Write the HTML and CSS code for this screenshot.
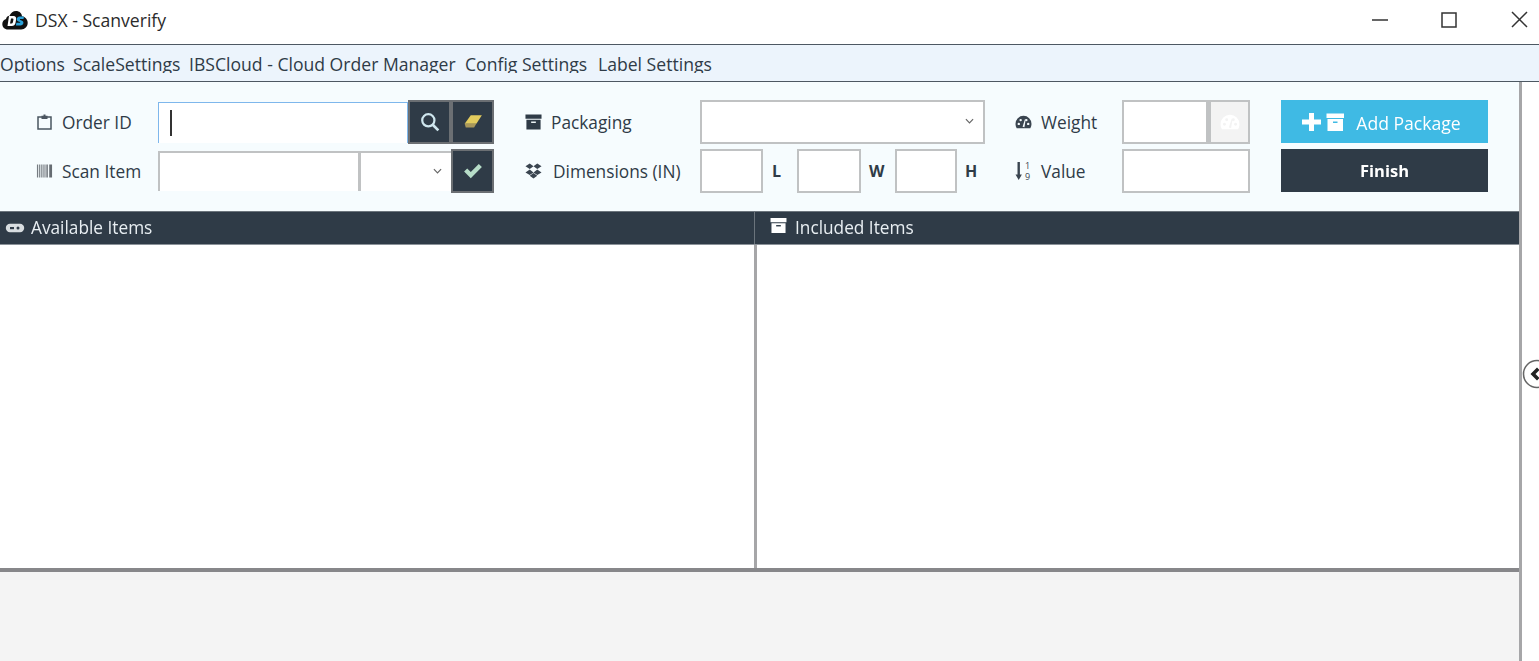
FILE: index.html
```html
<!DOCTYPE html>
<html lang="en">
<head>
<meta charset="utf-8">
<title>DSX - Scanverify</title>
<link rel="stylesheet" href="styles.css">
</head>
<body>
<div class="window">
  <header class="titlebar">
    <svg class="app-logo" viewBox="0 0 26 20"><path d="M6 19.500C2.500 19.500.3 17 .3 14c0-2.600 1.600-4.500 3.700-5C4.500 7 6 5.800 7.500 5.800 9 2.800 11 1 14 1c3.400 0 5.600 2.200 6 5.200 3.300.6 5.700 3.200 5.700 6.600 0 3.800-2.800 6.700-6.500 6.700z" fill="#111"/><path d="M7 6h4.500c2 0 3 1.500 2.600 3.500l-.6 3.500c-.4 2-1.800 3-3.600 3H5.500zM9 8.500l-1 5h1.500c.7 0 1.200-.4 1.400-1.200l.5-2.500c.1-.8-.2-1.300-1-1.300z" fill="#fff"/><path d="M22 6.500h-4.500c-1.500 0-2.500 1-2.700 2.300-.2 1.400.5 2.200 1.700 2.600l1.500.5c.4.200.3.900-.3.900h-3.300l-.5 2.700h4.500c1.700 0 2.800-1 3-2.500.2-1.400-.5-2.200-1.800-2.600l-1.400-.5c-.5-.2-.4-.8.200-.8h3.100z" fill="#2aa3dc"/></svg>
    <span class="app-title">DSX - Scanverify</span>
    <div class="window-controls">
      <svg class="wc" viewBox="0 0 70 30"><path d="M2 15h16" stroke="#333" stroke-width="1.500" fill="none"/></svg>
      <svg class="wc" viewBox="0 0 70 30"><rect x="2" y="8" width="14" height="14" stroke="#333" stroke-width="1.500" fill="none"/></svg>
      <svg class="wc wc-close" viewBox="0 0 19 30"><path d="M2 7l15 15M17 7L2 22" stroke="#333" stroke-width="1.500" fill="none"/></svg>
    </div>
  </header>

  <nav class="menubar">
    <span class="menu-item m1">Options</span>
    <span class="menu-item m2">ScaleSettings</span>
    <span class="menu-item m3">IBSCloud - Cloud Order Manager</span>
    <span class="menu-item m4">Config Settings</span>
    <span class="menu-item m5">Label Settings</span>
  </nav>

  <div class="workspace">
    <main class="content">
      <section class="toolbar">
        <div class="group group-order">
          <label class="field-label">
            <svg class="ico" viewBox="0 0 16 16"><path d="M1.500 3h13v12h-13z" fill="none" stroke="#4a5560" stroke-width="1.500"/><path d="M5 1.800h2V.5h2v1.300h2V5H5z" fill="#4a5560"/></svg>
            <span>Order ID</span>
          </label>
          <div class="fields">
            <div class="input focused grow"><span class="caret"></span></div>
            <button class="icon-btn"><svg viewBox="0 0 18 18" class="ico-btn"><circle cx="7.500" cy="7.500" r="5.500" fill="none" stroke="#cfe6ee" stroke-width="2"/><path d="M11.500 11.500l5 5" stroke="#cfe6ee" stroke-width="2.400"/></svg></button>
            <button class="icon-btn"><svg viewBox="0 0 18 18" class="ico-btn"><path d="M7 3h10l-5 7.500H1.500z" fill="#e3cc5e"/><path d="M1.500 10.500H12L10 14H2.500z" fill="#a9975a"/></svg></button>
          </div>
          <label class="field-label">
            <svg class="ico" viewBox="0 0 18 16"><path d="M1 1h1v14H1zM3 1h1v14H3zM5 1h1v14H5zM7 1h1v14H7zM9 1h1v14H9zM11 1h1.500v14H11zM14 1h3v14h-3z" fill="#666c72"/></svg>
            <span>Scan Item</span>
          </label>
          <div class="fields">
            <div class="input scan"></div>
            <div class="input select small grow"><svg class="chev" viewBox="0 0 10 6"><path d="M1 1l4 4 4-4" fill="none" stroke="#666" stroke-width="1.300"/></svg></div>
            <button class="icon-btn"><svg viewBox="0 0 18 18" class="ico-btn"><path d="M1 9.500l2.800-2.800 3.200 3.200L14.200 2.700 17 5.500 7 15.500z" fill="#b7ddc8"/></svg></button>
          </div>
        </div>

        <div class="group group-pack">
          <label class="field-label">
            <svg class="ico" viewBox="0 0 18 16"><path d="M.5 0h17v4.500H.5zM1.500 5.500h15V16h-15z" fill="#2f3b47"/><rect x="6.500" y="7.500" width="5" height="1.500" fill="#f6fcfe"/></svg>
            <span>Packaging</span>
          </label>
          <div class="fields">
            <div class="input select grow"><svg class="chev" viewBox="0 0 10 6"><path d="M1 1l4 4 4-4" fill="none" stroke="#666" stroke-width="1.300"/></svg></div>
          </div>
          <label class="field-label label-dim">
            <svg class="ico" viewBox="0 0 18 16"><path d="M5 0l4 3-4 3-4.500-3zM13 0l4.500 3L13 6 9 3zM5 6.500l4 3-4 2.800-4.500-2.800zM13 6.500l4.500 3L13 12.300 9 9.500zM5 13l4-2.800 4 2.800-4 3z" fill="#3a4550"/></svg>
            <span>Dimensions (IN)</span>
          </label>
          <div class="fields dims">
            <div class="input dim"></div><b class="unit u-l">L</b>
            <div class="input dim wide"></div><b class="unit u-w">W</b>
            <div class="input dim narrow"></div><b class="unit u-h">H</b>
          </div>
        </div>

        <div class="group group-weight">
          <label class="field-label">
            <svg class="ico" viewBox="0 0 18 16"><path d="M9 1.500a8.500 8.500 0 0 0-8.500 8.500c0 1.700.5 3.200 1.300 4.500h14.400c.8-1.300 1.300-2.800 1.300-4.500A8.500 8.500 0 0 0 9 1.500z" fill="#3a4550"/><g fill="#f6fcfe"><circle cx="4" cy="10" r="1.300"/><circle cx="6" cy="6" r="1.300"/><circle cx="12" cy="6" r="1.300"/><circle cx="14" cy="10" r="1.300"/><path d="M8 13l2.500-8 .8.300L10 13.500z"/></g></svg>
            <span>Weight</span>
          </label>
          <div class="fields">
            <div class="input grow"></div>
            <button class="scale-btn"><svg class="ico-btn" viewBox="0 0 18 16"><path d="M9 1.500a8.500 8.500 0 0 0-8.500 8.500c0 1.700.5 3.200 1.300 4.500h14.400c.8-1.300 1.300-2.800 1.300-4.500A8.500 8.500 0 0 0 9 1.500z" fill="#fff"/><g fill="#f3f3f3"><circle cx="4" cy="10" r="1.300"/><circle cx="6" cy="6" r="1.300"/><circle cx="12" cy="6" r="1.300"/><circle cx="14" cy="10" r="1.300"/><path d="M8 13l2.500-8 .8.300L10 13.500z"/></g></svg></button>
          </div>
          <label class="field-label">
            <svg class="ico ico-tall" viewBox="0 0 17 20"><path d="M2.500 1h2.400v12.500h2L3.700 19 .5 13.500h2z" fill="#3a4550"/><text x="10" y="8" class="sort-num">1</text><text x="10" y="18.500" class="sort-num">9</text></svg>
            <span>Value</span>
          </label>
          <div class="fields">
            <div class="input grow"></div>
          </div>
        </div>

        <div class="actions">
          <button class="btn btn-add">
            <svg class="add-ico" viewBox="0 0 42 18"><path d="M7 0h5v6.500h7v5h-7V18H7v-6.500H0v-5h7z" fill="#fff"/><path d="M24.500.5H42V5H24.500zM25.500 6H41v12H25.500z" fill="#fff"/><rect x="31" y="8.500" width="4.500" height="1.500" fill="#3fbae4"/></svg>
            <span>Add Package</span>
          </button>
          <button class="btn btn-finish">Finish</button>
        </div>
      </section>

      <section class="panels">
        <div class="panel panel-left">
          <h2 class="panel-head">
            <svg class="head-ico" viewBox="0 0 20 12"><rect x=".8" y="1.800" width="18.400" height="8.400" rx="4.200" fill="#d8dde0"/><rect x="5" y="5" width="4" height="2.200" fill="#2f3b47"/><circle cx="13" cy="6" r="1.500" fill="#2f3b47"/></svg>
            <span>Available Items</span>
          </h2>
          <div class="panel-body"></div>
        </div>
        <div class="panel panel-right">
          <h2 class="panel-head">
            <svg class="head-ico ico-box" viewBox="0 0 18 16"><path d="M.5 0h17v4.500H.5zM1.500 5.500h15V16h-15z" fill="#fff"/><rect x="6.500" y="7.500" width="5" height="1.500" fill="#2f3b47"/></svg>
            <span>Included Items</span>
          </h2>
          <div class="panel-body"></div>
        </div>
      </section>
      <footer class="status-area"></footer>
    </main>
    <aside class="side">
      <button class="side-toggle"><svg viewBox="0 0 30 30"><circle cx="15" cy="15" r="13.500" fill="#fff" stroke="#666" stroke-width="1.500"/><path d="M15 8.500l-6.500 6.500 6.500 6.500 2.500-2.500-4-4 4-4z" fill="#222"/></svg></button>
    </aside>
  </div>
</div>
</body>
</html>
```

FILE: styles.css
```css
* { box-sizing: border-box; }
html, body { margin: 0; height: 100%; overflow: hidden; background: #fff; }
body { font-family: "Open Sans", "Noto Sans", sans-serif; color: #2f3b47; }
.window { width: 1539px; height: 661px; display: flex; flex-direction: column; filter: blur(.45px); }

.titlebar { height: 44px; flex: none; display: flex; align-items: center; background: #fff; padding-bottom: 4px; }
.app-logo { width: 26px; height: 20px; margin-left: 2px; flex: none; }
.app-title { margin-left: 7px; font-size: 17.600px; color: #2b2b2b; }
.window-controls { margin-left: auto; display: flex; align-items: center; height: 100%; }
.wc { width: 70px; height: 30px; flex: none; }
.wc-close { width: 19px; margin-right: 10px; }

.menubar { height: 38px; flex: none; display: flex; background: #ecf4fc; border-top: 1.500px solid #4d5862; border-bottom: 1.500px solid #4d5862; overflow: hidden; }
.menu-item { font-size: 17.600px; line-height: 39px; height: 28px; overflow: hidden; color: #2f3b47; white-space: nowrap; }
.m1 { width: 73px; }
.m2 { width: 116px; }
.m3 { width: 276px; }
.m4 { width: 133px; }

.workspace { flex: 1; display: flex; min-height: 0; }
.content { width: 1522px; flex: none; display: flex; flex-direction: column; border-right: 3px solid #a6a6a8; }

.toolbar { height: 129px; flex: none; background: #f6fcfe; display: flex; padding: 18px 0 0 36px; }
.group { display: grid; grid-template-rows: 44px 44px; row-gap: 5px; align-items: stretch; }
.group-order { grid-template-columns: 122px 336px; }
.group-pack { grid-template-columns: 175px 285px; margin-left: 31px; }
.group-weight { grid-template-columns: 107px 128px; margin-left: 30px; }

.field-label { display: flex; align-items: center; font-size: 17.300px; gap: 9px; color: #2f3b47; white-space: nowrap; }
.field-label span { padding-top: 1px; }
.label-dim { gap: 11px; }
.ico { width: 17px; height: 16px; flex: none; }
.ico-tall { height: 20px; }
.fields { display: flex; align-items: stretch; height: 44px; }
.grow { flex: 1; min-width: 0; }

.input { background: #fff; border: 2px solid #c0c2c3; display: flex; align-items: center; }
.input.focused { border-color: #7eb7ec; border-width: 1.500px 1.500px 0 1.500px; margin: 2px 0 1px; }
.input.scan { width: 203px; flex: none; border-bottom: 0; border-right-width: 3px; margin: 2px 0; }
.input.small { border-left: 0; border-right: 0; border-bottom: 0; margin: 2px 0; }
.caret { width: 2px; height: 26px; background: #333; margin-left: 11px; }
.select { justify-content: flex-end; padding-right: 9px; }
.chev { width: 9px; height: 6px; margin-top: -3px; }

.icon-btn { width: 43px; flex: none; padding: 0; background: #2f3b47; border: 2px solid #6b6f73; display: flex; align-items: center; justify-content: center; }
.ico-btn { width: 20px; height: 20px; }
.scale-btn { width: 42px; flex: none; padding: 0; background: #f3f3f3; border: 2px solid #c0c2c3; border-left-width: 3px; display: flex; align-items: center; justify-content: center; }

.dims { align-items: stretch; }
.dim { width: 63px; flex: none; }
.dim.wide { width: 64px; }
.dim.narrow { width: 62px; }
.unit { font-size: 16px; font-weight: 700; color: #2f3b47; align-self: center; }
.u-l { width: 34px; padding-left: 9px; }
.u-w { width: 34px; padding-left: 8px; }
.u-h { padding-left: 8px; }

.sort-num { font-size: 9px; font-family: "Open Sans", sans-serif; fill: #3a4550; }

.actions { display: flex; flex-direction: column; gap: 6px; margin-left: 31px; width: 207px; height: 92px; }
.btn { height: 43px; border: 0; padding: 0; color: #fff; font-family: inherit; font-size: 17.600px; display: flex; align-items: center; justify-content: center; }
.btn-add { background: #3fbae4; gap: 12px; padding-right: 6px; }
.btn-add span { padding-top: 2px; }
.add-ico { width: 42px; height: 18px; }
.btn-finish { background: #2f3b47; font-weight: 700; font-size: 16.500px; }

.panels { display: flex; height: 357px; flex: none; }
.panel { display: flex; flex-direction: column; }
.panel-left { width: 757px; flex: none; }
.panel-right { flex: 1; }
.panel-head { height: 34px; flex: none; margin: 0; display: flex; align-items: center; background: #2f3b47; color: #e8eef2; font-size: 17.250px; font-weight: 400; border-top: 1px solid #6b747c; border-bottom: 1px solid #8b9299; padding-bottom: 1px; }
.panel-left .panel-head { padding-left: 5px; gap: 6px; box-shadow: inset -2px 0 0 #2f3b47, inset -3px 0 0 #6b747c; }
.panel-right .panel-head { padding-left: 13px; gap: 8px; }
.panel-left .panel-body { border-right: 3px solid #a6a6a8; }
.head-ico { width: 20px; height: 12px; }
.ico-box { width: 17px; height: 15px; margin-top: -4px; }
.panel-body { flex: 1; background: #fff; }

.status-area { flex: 1; background: #f4f4f4; border-top: 4px solid #87878a; }

.side { flex: 1; position: relative; background: #fff; }
.side-toggle { position: absolute; left: 0; top: 277px; width: 30px; height: 30px; padding: 0; border: 0; background: none; }
.side-toggle svg { width: 30px; height: 30px; display: block; }
```
